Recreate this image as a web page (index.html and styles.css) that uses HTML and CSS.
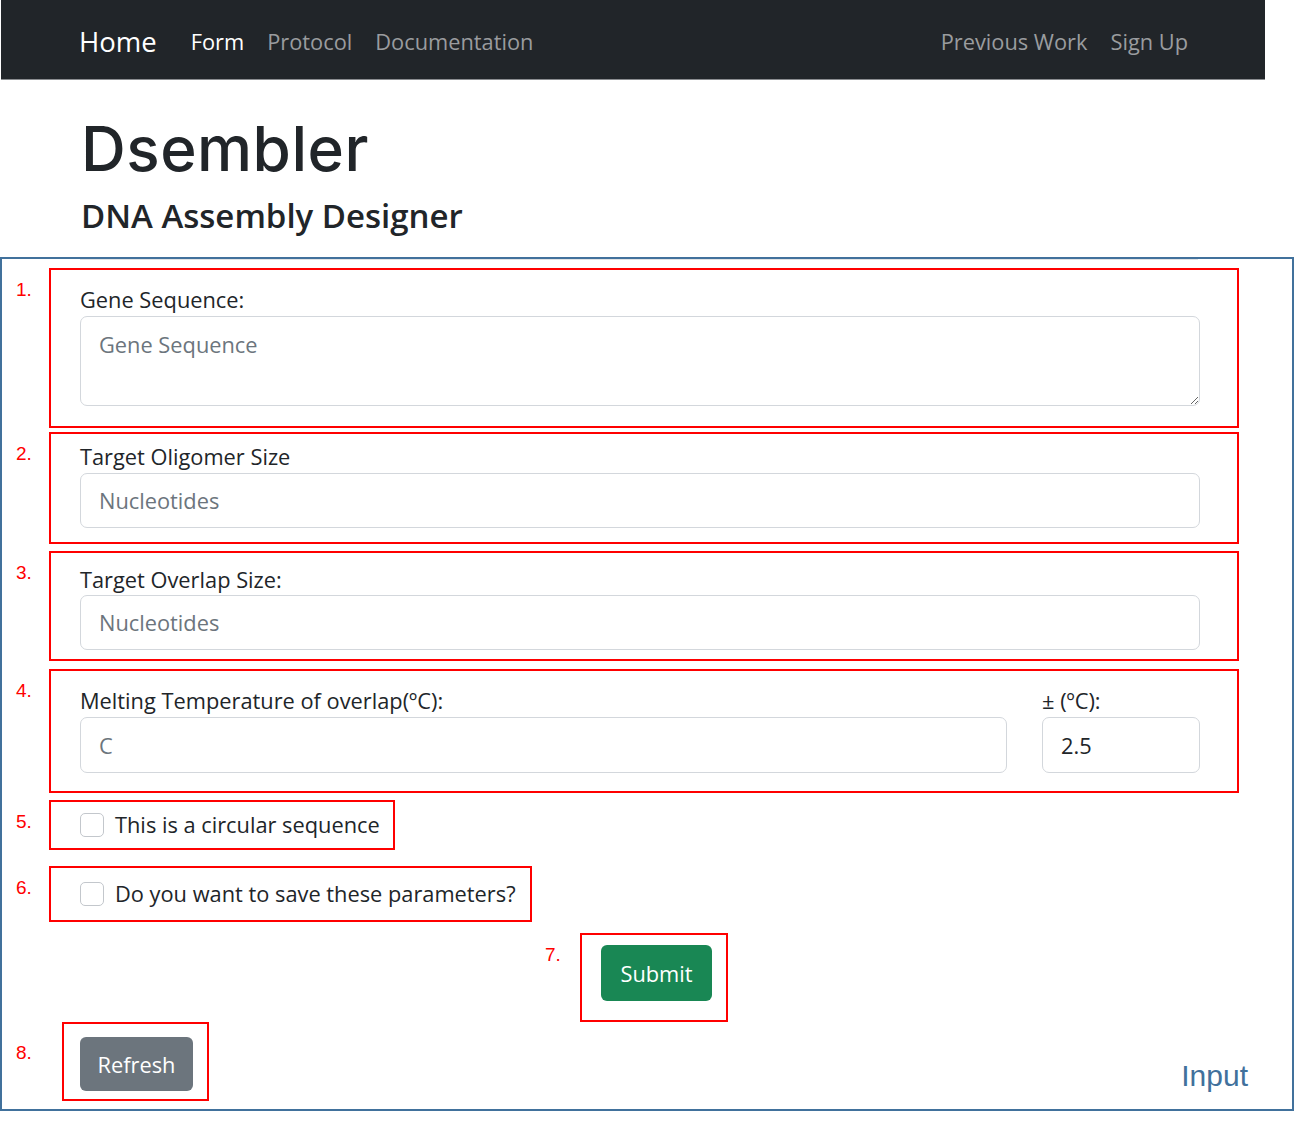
FILE: index.html
```html
<!DOCTYPE html>
<html lang="en">
<head>
<meta charset="utf-8">
<title>Dsembler</title>
<link rel="stylesheet" href="styles.css">
</head>
<body>
<nav class="navbar">
  <div class="nav-group">
    <a class="brand" href="#">Home</a>
    <a class="nav-link active" href="#">Form</a>
    <a class="nav-link" href="#">Protocol</a>
    <a class="nav-link" href="#">Documentation</a>
  </div>
  <div class="nav-group">
    <a class="nav-link" href="#">Previous Work</a>
    <a class="nav-link" href="#">Sign Up</a>
  </div>
</nav>

<header class="hero">
  <h1 class="title">Dsembler</h1>
  <h2 class="subtitle">DNA Assembly Designer</h2>
</header>

<section class="frame">
  <div class="rule"></div>

  <div class="anno box-1">
    <span class="num">1.</span>
    <label class="label">Gene Sequence:</label>
    <textarea class="control textarea" placeholder="Gene Sequence"></textarea>
  </div>

  <div class="anno box-2">
    <span class="num">2.</span>
    <label class="label">Target Oligomer Size</label>
    <input class="control input-55" type="text" placeholder="Nucleotides">
  </div>

  <div class="anno box-3">
    <span class="num">3.</span>
    <label class="label">Target Overlap Size:</label>
    <input class="control input-55 flush" type="text" placeholder="Nucleotides">
  </div>

  <div class="anno box-4">
    <span class="num">4.</span>
    <div class="temp-row">
      <div class="temp-main">
        <label class="label">Melting Temperature of overlap(ºC):</label>
        <input class="control input-56" type="text" placeholder="C">
      </div>
      <div class="temp-tol">
        <label class="label">± (ºC):</label>
        <input class="control input-56" type="text" value="2.5">
      </div>
    </div>
  </div>

  <div class="anno box-5">
    <span class="num">5.</span>
    <label class="check"><input type="checkbox" class="checkbox"><span>This is a circular sequence</span></label>
  </div>

  <div class="anno box-6">
    <span class="num">6.</span>
    <label class="check"><input type="checkbox" class="checkbox"><span>Do you want to save these parameters?</span></label>
  </div>

  <div class="anno box-7">
    <span class="num num-7">7.</span>
    <button class="btn btn-success" type="button">Submit</button>
  </div>

  <div class="bottom-row">
    <div class="anno box-8">
      <span class="num num-8">8.</span>
      <button class="btn btn-secondary" type="button">Refresh</button>
    </div>
    <div class="caption">Input</div>
  </div>
</section>
</body>
</html>
```

FILE: styles.css
```css
* { box-sizing: border-box; }

html, body {
  margin: 0;
  padding: 0;
  background: #ffffff;
}

body {
  width: 1294px;
  font-family: "Open Sans", "Noto Sans", "Liberation Sans", sans-serif;
  color: #212529;
}

/* ---------- navbar ---------- */
.navbar {
  margin-left: 1px;
  width: 1264px;
  height: 80px;
  background: #212529;
  border-bottom: 1px solid #8a8d90;
  display: flex;
  align-items: center;
  justify-content: space-between;
  padding: 3px 77px 0 78px;
}

.nav-group {
  display: flex;
  align-items: center;
  gap: 23px;
}

.nav-group a { text-decoration: none; }

.brand {
  color: #ffffff;
  font-size: 27.5px;
  margin-right: 11px;
}

.nav-link {
  color: #9a9c9f;
  font-size: 21.8px;
}

.nav-link.active { color: #ffffff; }

/* ---------- header ---------- */
.hero {
  padding: 0 0 0 81px;
  height: 177px;
}

.title {
  margin: 0;
  padding-top: 34px;
  font-family: "Inter", "Open Sans", sans-serif;
  font-weight: 500;
  font-size: 62px;
  line-height: 70px;
  letter-spacing: 0.5px;
  color: #212529;
}

.subtitle {
  margin: 0;
  padding-top: 12px;
  font-weight: 600;
  font-size: 33px;
  line-height: 40px;
  color: #212529;
}

/* ---------- annotated frame ---------- */
.frame {
  width: 1294px;
  border: 2px solid #41719c;
  padding-bottom: 8px;
  display: flex;
  flex-direction: column;
}

.rule {
  height: 1px;
  margin: 0 94px 0 78px;
  background: #e1e3e5;
}

.anno {
  position: relative;
  border: 2px solid #ff0000;
  margin-left: 47px;
}

.num {
  position: absolute;
  left: -35px;
  top: 9px;
  font-family: "Liberation Sans", Arial, sans-serif;
  font-size: 19px;
  line-height: 22px;
  color: #ff0000;
}

.num-7 { left: -37px; }
.num-8 { left: -48px; top: 18px; }

.label {
  display: block;
  font-size: 21.8px;
  line-height: 30px;
  color: #212529;
}

.control {
  display: block;
  width: 100%;
  border: 1px solid #d3d7dc;
  border-radius: 7px;
  background: #ffffff;
  font-family: inherit;
  font-size: 21.8px;
  color: #212529;
  padding: 0 18px;
  outline: none;
}

.control::placeholder { color: #6c757d; }

.box-1 {
  width: 1190px;
  margin-top: 8px;
  padding: 15px 37px 20px 29px;
}

.textarea {
  margin-top: 1px;
  height: 90px;
  padding-top: 13px;
  line-height: 30px;
  resize: vertical;
}

.box-2 {
  width: 1190px;
  margin-top: 4px;
  padding: 8px 37px 14px 29px;
}

.input-55 { height: 55px; margin-top: 1px; }
.input-55.flush { margin-top: 0; }
.input-56 { height: 56px; margin-top: 1px; }

.box-3 {
  width: 1190px;
  margin-top: 7px;
  padding: 12px 37px 9px 29px;
}

.box-4 {
  width: 1190px;
  margin-top: 8px;
  padding: 15px 37px 18px 29px;
}

.temp-row {
  display: flex;
  gap: 35px;
}

.temp-main { flex: 1; }
.temp-tol { width: 158px; }

.box-5 {
  width: 346px;
  height: 50px;
  margin-top: 7px;
  display: flex;
  align-items: center;
  padding-left: 29px;
}

.box-6 {
  width: 483px;
  height: 56px;
  margin-top: 16px;
  display: flex;
  align-items: center;
  padding-left: 29px;
}

.check {
  display: flex;
  align-items: center;
  gap: 11px;
  font-size: 21.8px;
  line-height: 30px;
  color: #212529;
}

.checkbox {
  appearance: none;
  -webkit-appearance: none;
  margin: 0;
  width: 24px;
  height: 24px;
  border: 1px solid #c3c7cc;
  border-radius: 5px;
  background: #ffffff;
}

.box-7 {
  width: 148px;
  height: 89px;
  margin-top: 11px;
  margin-left: 578px;
  padding: 10px 0 0 19px;
}

.btn {
  display: block;
  border: none;
  border-radius: 6px;
  font-family: inherit;
  font-size: 21.8px;
  color: #ffffff;
  padding: 0;
  cursor: pointer;
}

.btn-success {
  width: 111px;
  height: 56px;
  background: #198754;
}

.bottom-row {
  display: flex;
  justify-content: space-between;
  align-items: flex-end;
}

.box-8 {
  width: 147px;
  height: 79px;
  margin-left: 60px;
  padding: 13px 0 0 16px;
}

.btn-secondary {
  width: 113px;
  height: 54px;
  background: #6c757d;
}

.caption {
  font-family: "Liberation Sans", Arial, sans-serif;
  font-size: 30px;
  line-height: 34px;
  color: #41719c;
  margin: 0 44px 8px 0;
}
```
